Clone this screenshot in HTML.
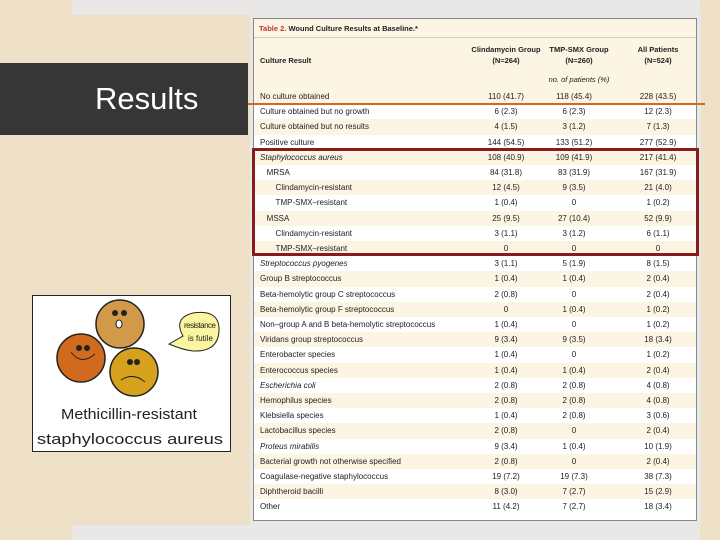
<!DOCTYPE html>
<html><head><meta charset="utf-8"><style>
*{margin:0;padding:0;box-sizing:border-box}
html,body{width:720px;height:540px;overflow:hidden;background:#eee1c7}
body{position:relative;font-family:"Liberation Sans",sans-serif}
.bg{position:absolute;left:0;top:0;width:720px;height:540px;background:#eee1c7}
.strip{position:absolute;left:72px;width:628px;background:#e9e8e6}
.bar{position:absolute;left:0;top:63px;width:248px;height:72px;background:#363636}
.bar span{position:absolute;left:95px;top:18px;color:#fff;font-size:31px}
.tbl{position:absolute;left:250px;top:15px;width:451px;height:511px;background:#e8e8e8}
.in{position:absolute;left:3px;top:3px;width:444px;height:503px;background:#fff;border:1px solid #888;overflow:hidden}
.r{position:absolute;left:0;width:442px;height:15.2px;font-size:8px;color:#222;line-height:15.2px}
.r.c{background:#fcf5e3}
.r b{font-weight:normal;position:absolute;white-space:nowrap}
.l{left:6px}.a{left:222px;width:60px;text-align:center}.bb{left:290px;width:60px;text-align:center}.cc{left:374px;width:60px;text-align:center}
.hd{position:absolute;font-size:7.5px;color:#222;text-align:center;line-height:11px;white-space:nowrap}
</style></head><body>
<div class="bg"></div>
<div class="strip" style="top:0;height:15px"></div>
<div class="strip" style="top:525px;height:15px"></div>
<div class="bar"><span>Results</span></div>
<div style="position:absolute;left:32px;top:295px;width:199px;height:157px;background:#fff;border:1px solid #222">
<svg width="197" height="155" viewBox="0 0 197 155">
<circle cx="87" cy="28" r="24" fill="#d29a48" stroke="#222" stroke-width="1.5"/>
<circle cx="48" cy="62" r="24" fill="#d26a1e" stroke="#222" stroke-width="1.5"/>
<circle cx="101" cy="76" r="24" fill="#d6a21e" stroke="#222" stroke-width="1.5"/>
<circle cx="82" cy="17" r="3" fill="#222"/><circle cx="91" cy="17" r="3" fill="#222"/><ellipse cx="86" cy="28" rx="3" ry="4" fill="#fff" stroke="#222"/>
<circle cx="46" cy="52" r="3" fill="#222"/><circle cx="54" cy="52" r="3" fill="#222"/><path d="M38 56 Q48 70 62 58" stroke="#222" fill="none"/>
<circle cx="97" cy="66" r="3" fill="#222"/><circle cx="104" cy="66" r="3" fill="#222"/><path d="M88 84 Q100 76 112 86" stroke="#222" fill="none"/>
<path d="M136 48 L150 40 Q140 22 160 17 Q187 13 186 35 Q185 56 160 55 Q150 54 136 48Z" fill="#fbf5a0" stroke="#222"/>
<text x="151" y="32" font-size="8" fill="#222" textLength="32">resistance</text><text x="155" y="45" font-size="8" fill="#222">is futile</text>
<text x="96" y="123" font-size="15" text-anchor="middle" fill="#222" textLength="136" lengthAdjust="spacingAndGlyphs">Methicillin-resistant</text>
<text x="97" y="148" font-size="15" text-anchor="middle" fill="#222" textLength="186" lengthAdjust="spacingAndGlyphs">staphylococcus aureus</text>
</svg></div>
<div class="tbl"><div class="in">
<div style="position:absolute;left:0;top:0;width:442px;height:19px;background:#fcf5e3;border-bottom:1px solid #ccc;font-size:7.5px;line-height:19px;padding-left:5px;font-weight:bold;color:#222"><span style="color:#c0392b">Table 2.</span> Wound Culture Results at Baseline.*</div>
<div style="position:absolute;left:0;top:19px;width:442px;height:51px;background:#fcf5e3"></div>
<div class="hd" style="left:6px;top:36px;font-weight:bold">Culture Result</div>
<div class="hd" style="left:212px;top:25px;width:80px;font-weight:bold">Clindamycin Group<br>(N=264)</div>
<div class="hd" style="left:290px;top:25px;width:70px;font-weight:bold">TMP-SMX Group<br>(N=260)</div>
<div class="hd" style="left:374px;top:25px;width:60px;font-weight:bold">All Patients<br>(N=524)</div>
<div class="hd" style="left:290px;top:55px;width:70px;font-style:italic">no. of patients (%)</div>
<div id="rows"></div>
</div></div>
<div style="position:absolute;left:248px;top:103px;width:457px;height:2px;background:#d2691e"></div>
<div style="position:absolute;left:252px;top:148px;width:447px;height:108px;border:3px solid #8b1a1a"></div>
<script>
var d=[["No culture obtained","110 (41.7)","118 (45.4)","228 (43.5)"],["Culture obtained but no growth","6 (2.3)","6 (2.3)","12 (2.3)"],["Culture obtained but no results","4 (1.5)","3 (1.2)","7 (1.3)"],["Positive culture","144 (54.5)","133 (51.2)","277 (52.9)"],["<i>Staphylococcus aureus</i>","108 (40.9)","109 (41.9)","217 (41.4)"],["&nbsp;&nbsp;&nbsp;MRSA","84 (31.8)","83 (31.9)","167 (31.9)"],["&nbsp;&nbsp;&nbsp;&nbsp;&nbsp;&nbsp;&nbsp;Clindamycin-resistant","12 (4.5)","9 (3.5)","21 (4.0)"],["&nbsp;&nbsp;&nbsp;&nbsp;&nbsp;&nbsp;&nbsp;TMP-SMX–resistant","1 (0.4)","0","1 (0.2)"],["&nbsp;&nbsp;&nbsp;MSSA","25 (9.5)","27 (10.4)","52 (9.9)"],["&nbsp;&nbsp;&nbsp;&nbsp;&nbsp;&nbsp;&nbsp;Clindamycin-resistant","3 (1.1)","3 (1.2)","6 (1.1)"],["&nbsp;&nbsp;&nbsp;&nbsp;&nbsp;&nbsp;&nbsp;TMP-SMX–resistant","0","0","0"],["<i>Streptococcus pyogenes</i>","3 (1.1)","5 (1.9)","8 (1.5)"],["Group B streptococcus","1 (0.4)","1 (0.4)","2 (0.4)"],["Beta-hemolytic group C streptococcus","2 (0.8)","0","2 (0.4)"],["Beta-hemolytic group F streptococcus","0","1 (0.4)","1 (0.2)"],["Non–group A and B beta-hemolytic streptococcus","1 (0.4)","0","1 (0.2)"],["Viridans group streptococcus","9 (3.4)","9 (3.5)","18 (3.4)"],["Enterobacter species","1 (0.4)","0","1 (0.2)"],["Enterococcus species","1 (0.4)","1 (0.4)","2 (0.4)"],["<i>Escherichia coli</i>","2 (0.8)","2 (0.8)","4 (0.8)"],["Hemophilus species","2 (0.8)","2 (0.8)","4 (0.8)"],["Klebsiella species","1 (0.4)","2 (0.8)","3 (0.6)"],["Lactobacillus species","2 (0.8)","0","2 (0.4)"],["<i>Proteus mirabilis</i>","9 (3.4)","1 (0.4)","10 (1.9)"],["Bacterial growth not otherwise specified","2 (0.8)","0","2 (0.4)"],["Coagulase-negative staphylococcus","19 (7.2)","19 (7.3)","38 (7.3)"],["Diphtheroid bacilli","8 (3.0)","7 (2.7)","15 (2.9)"],["Other","11 (4.2)","7 (2.7)","18 (3.4)"]];
var h="";d.forEach(function(r,i){h+='<div class="r'+(i%2?'':' c')+'" style="top:'+(70+i*15.2)+'px"><b class="l">'+r[0]+'</b><b class="a">'+r[1]+'</b><b class="bb">'+r[2]+'</b><b class="cc">'+r[3]+'</b></div>'});
document.getElementById("rows").innerHTML=h;
</script>
</body></html>
